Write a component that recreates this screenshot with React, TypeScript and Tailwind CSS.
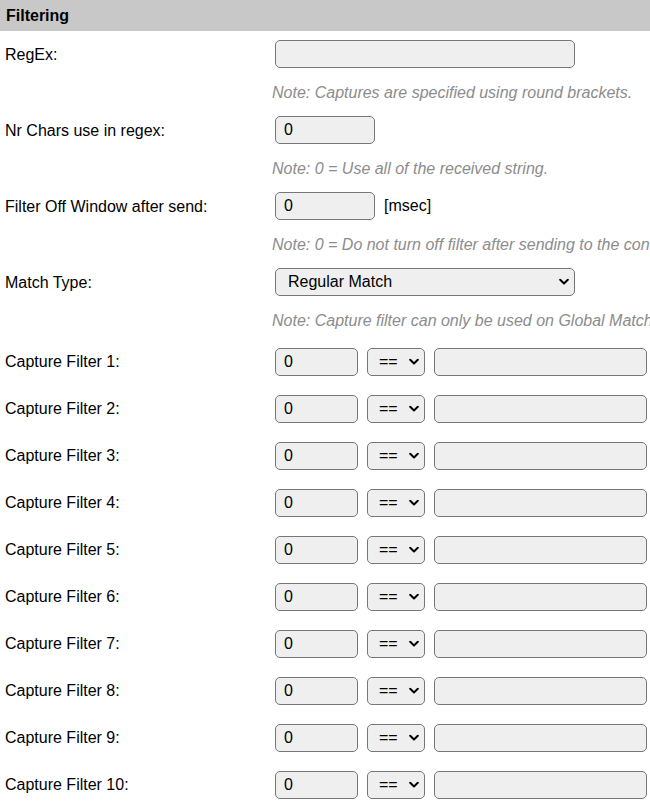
import React from "react";

const Chevron = () => (
  <svg width="10" height="7" viewBox="0 0 10 7" className="pointer-events-none absolute right-[6px] top-1/2 -translate-y-1/2">
    <path d="M1.2 1.3 L5 5 L8.8 1.3" fill="none" stroke="#000" strokeWidth="2" strokeLinecap="round" strokeLinejoin="round" />
  </svg>
);

const inputCls =
  "h-[28px] rounded-[5px] border border-[#767676] bg-[#efefef] px-[8px] text-[16px] text-black outline-none";

function Select({ value, width, pl }: { value: string; width: string; pl: string }) {
  return (
    <div className={`relative ${width}`}>
      <select
        defaultValue={value}
        className={`h-[28px] w-full appearance-none rounded-[5px] border border-[#767676] bg-[#efefef] ${pl} text-[16px] text-black outline-none`}
      >
        <option>{value}</option>
      </select>
      <Chevron />
    </div>
  );
}

function Note({ children }: { children: React.ReactNode }) {
  return (
    <div className="flex h-[29px] items-center overflow-hidden whitespace-nowrap pl-[272px] text-[16px] italic text-[#8c8c8c]">
      {children}
    </div>
  );
}

function Row({ label, children }: { label: string; children: React.ReactNode }) {
  return (
    <div className="flex items-center pt-[9px] pb-[10px]">
      <div className="w-[275px] shrink-0 pl-[5px] pt-[1px]">{label}</div>
      {children}
    </div>
  );
}

export default function App() {
  const captures = Array.from({ length: 10 }, (_, i) => i + 1);
  return (
    <div
      className="w-[650px] overflow-hidden bg-white text-[16px] text-black"
      style={{ fontFamily: '"Liberation Sans", Arial, sans-serif' }}
    >
      <div className="flex h-[31px] items-center bg-[#c8c8c8] pl-[6px] pt-[1px] font-bold">Filtering</div>

      <Row label="RegEx:">
        <input className={`${inputCls} w-[300px]`} defaultValue="" />
      </Row>
      <Note>Note: Captures are specified using round brackets.</Note>

      <Row label="Nr Chars use in regex:">
        <input className={`${inputCls} w-[100px]`} defaultValue="0" />
      </Row>
      <Note>Note: 0 = Use all of the received string.</Note>

      <Row label="Filter Off Window after send:">
        <input className={`${inputCls} w-[100px]`} defaultValue="0" />
        <span className="ml-[9px]">[msec]</span>
      </Row>
      <Note>Note: 0 = Do not turn off filter after sending to the controller.</Note>

      <Row label="Match Type:">
        <Select value="Regular Match" width="w-[300px]" pl="pl-[12px]" />
      </Row>
      <Note>Note: Capture filter can only be used on Global Match.</Note>

      <div className="pt-[3px]">
        {captures.map((n) => (
          <div key={n} className="flex h-[47px] items-center">
            <div className="w-[275px] shrink-0 pl-[5px] pt-[1px]">{`Capture Filter ${n}:`}</div>
            <input className={`${inputCls} w-[83px]`} defaultValue="0" />
            <div className="ml-[9px]">
              <Select value="==" width="w-[58px]" pl="pl-[11px]" />
            </div>
            <input className={`${inputCls} ml-[9px] w-[213px] shrink-0`} defaultValue="" />
          </div>
        ))}
      </div>
    </div>
  );
}
